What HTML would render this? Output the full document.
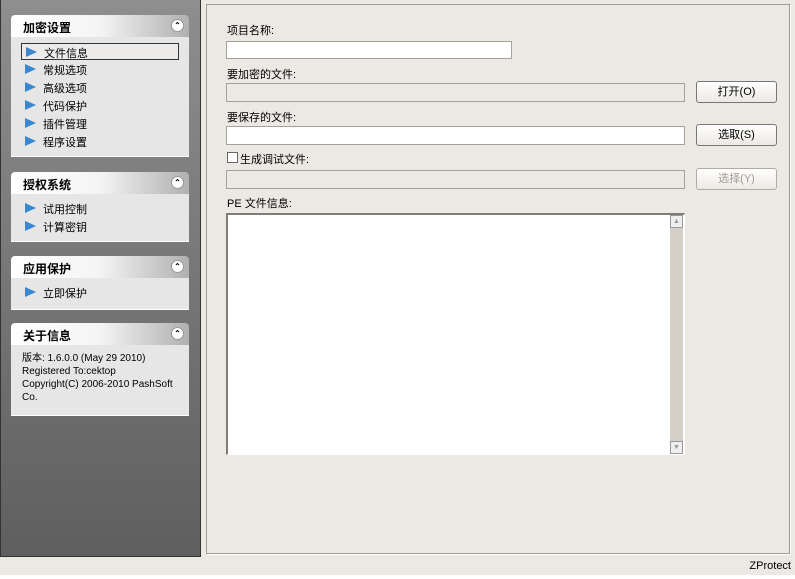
<!DOCTYPE html>
<html><head><meta charset="utf-8"><style>
*{margin:0;padding:0;box-sizing:border-box}
body{width:795px;height:579px;background:#fff;position:relative;overflow:hidden;font-family:"Liberation Sans","Noto Sans CJK SC",sans-serif;font-size:11px;color:#000}
.abs{position:absolute}
#left{left:0;top:0;width:201px;height:557px;background:linear-gradient(#8e8e8e,#5f5f5f);border:1px solid #333;border-top:none}
#strip{left:0;top:557px;width:795px;height:18px;background:#ece9e4}
#right{left:201px;top:0;width:594px;height:557px;background:#ece9e4}
#frame{left:206px;top:4px;width:585px;height:551px;border:1px solid #a09c94;border-right-color:#fff;border-bottom-color:#fff;box-shadow:inset -1px -1px 0 #a09c94}
.ph{position:absolute;left:11px;width:178px;height:22px;background:linear-gradient(90deg,#fff 0%,#f4f4f4 50%,#b0b0b0 100%);border-radius:4px 4px 0 0;font-weight:bold;font-size:12px;padding:4px 0 0 12px}
.ph i{position:absolute;right:5px;top:4px;width:13px;height:13px;border-radius:50%;background:#fff;border:1px solid #999;font-style:normal;font-size:8px;text-align:center;line-height:11px}
.pb{position:absolute;left:11px;width:178px;background:#e6e6e6;border-bottom:1px solid #fff}
.it{position:absolute;left:10px;height:17px;width:158px;font-size:11px;padding:1px 0 0 22px}
.it::before{content:"";position:absolute;left:4px;top:3px;width:0;height:0;border-left:11px solid #3a88d0;border-top:5px solid transparent;border-bottom:5px solid transparent}
.sel{border:1px solid #333;background:#ecebea}
.lbl{position:absolute;left:227px;font-size:11px}
.in{position:absolute;left:226px;border:1px solid #a5a29c;background:#fff}
.dis{background:#ece9e4}
.btn{position:absolute;left:696px;width:81px;height:22px;border:1px solid #777;border-radius:3px;background:linear-gradient(#fff,#ece9e4);text-align:center;line-height:20px;font-size:11px}
</style></head><body>
<div id="right" class="abs"></div>
<div id="frame" class="abs"></div>
<div id="left" class="abs"></div>
<div id="strip" class="abs"></div>
<div class="abs" style="right:4px;top:560px;font-size:11px">ZProtect</div>

<div class="ph" style="top:15px">加密设置<i>⌃</i></div>
<div class="pb" style="top:37px;height:120px">
<div class="it sel" style="top:6px">文件信息</div>
<div class="it" style="top:24px">常规选项</div>
<div class="it" style="top:42px">高级选项</div>
<div class="it" style="top:60px">代码保护</div>
<div class="it" style="top:78px">插件管理</div>
<div class="it" style="top:96px">程序设置</div>
</div>
<div class="ph" style="top:172px">授权系统<i>⌃</i></div>
<div class="pb" style="top:194px;height:48px">
<div class="it" style="top:6px">试用控制</div>
<div class="it" style="top:24px">计算密钥</div>
</div>
<div class="ph" style="top:256px">应用保护<i>⌃</i></div>
<div class="pb" style="top:278px;height:32px">
<div class="it" style="top:6px">立即保护</div>
</div>
<div class="ph" style="top:323px">关于信息<i>⌃</i></div>
<div class="pb" style="top:345px;height:71px;padding:7px 0 0 11px;font-size:10px;line-height:13px">版本: 1.6.0.0 (May 29 2010)<br>Registered To:cektop<br>Copyright(C) 2006-2010 PashSoft<br>Co.</div>

<div class="lbl" style="top:22px">项目名称:</div>
<div class="in" style="top:41px;width:286px;height:18px"></div>
<div class="lbl" style="top:66px">要加密的文件:</div>
<div class="in dis" style="top:83px;width:459px;height:19px"></div>
<div class="btn" style="top:81px">打开(O)</div>
<div class="lbl" style="top:109px">要保存的文件:</div>
<div class="in" style="top:126px;width:459px;height:19px"></div>
<div class="btn" style="top:124px">选取(S)</div>
<div class="abs" style="left:227px;top:152px;width:11px;height:11px;border:1px solid #666;background:#fff"></div>
<div class="lbl" style="left:240px;top:151px">生成调试文件:</div>
<div class="in dis" style="top:170px;width:459px;height:19px"></div>
<div class="btn" style="top:168px;color:#a09c94;border-color:#b0aca4">选择(Y)</div>
<div class="lbl" style="top:195px">PE 文件信息:</div>
<div class="in" style="top:213px;width:459px;height:242px;border-color:#7f7c77 #fff #fff #7f7c77;border-width:2px 1px 1px 2px"></div>
<div class="abs" style="left:670px;top:215px;width:13px;height:239px;background:#d4d0c8"></div>
<div class="abs" style="left:670px;top:215px;width:13px;height:13px;border:1px solid #999;background:#eee;font-size:7px;text-align:center;color:#999;line-height:11px">▲</div>
<div class="abs" style="left:670px;top:441px;width:13px;height:13px;border:1px solid #999;background:#eee;font-size:7px;text-align:center;color:#999;line-height:11px">▼</div>
</body></html>
